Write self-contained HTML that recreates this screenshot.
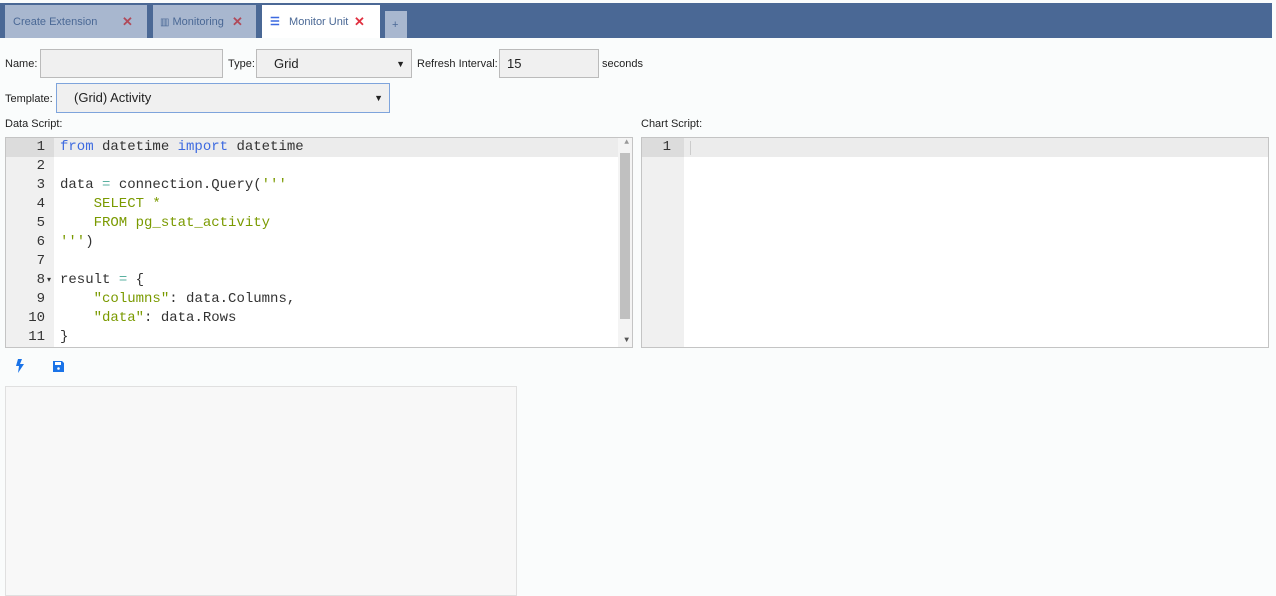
<!DOCTYPE html>
<html><head><style>
*{box-sizing:border-box;margin:0;padding:0}
body{width:1276px;height:594px;background:#fafcfc;font-family:"Liberation Sans",sans-serif;font-size:11px;color:#222;position:relative;overflow:hidden}
.bar{position:absolute;left:0;top:3px;width:1272px;height:35px;background:#4a6895}
.tab{position:absolute;top:5px;height:33px;background:#a8b7cf;color:#4a6895;font-size:11px;line-height:34px;padding-left:8px}
.tab.act{background:#fff}
.x{color:#b04a5a;font-weight:bold;position:absolute;font-size:13px}
.lbl{position:absolute;font-size:11px}
.inp{position:absolute;background:#f0f0f0;border:1px solid #bbb;font-size:13px;line-height:28px;padding-left:8px}
.sel:after{content:"▼";position:absolute;right:6px;top:0;font-size:9px;color:#222}
.ed{position:absolute;background:#fff;border:1px solid #c4c4c4;font-family:"Liberation Mono",monospace;font-size:14px;overflow:hidden}
.gut{position:absolute;left:0;top:0;bottom:0;width:48px;background:#f0f0f0;color:#333;text-align:right}
.ln{height:19px;line-height:19px;padding-right:9px}
.code{position:absolute;left:54px;top:0;color:#333}
.code div{height:19px;line-height:19px;white-space:pre}
.k{color:#3d6ae0}.s{color:#7a9a00}.o{color:#5ab0a0}
</style></head><body>
<div class="bar"></div>
<div class="tab" style="left:5px;width:142px">Create Extension<span class="x" style="left:117px;top:0">✕</span></div>
<div class="tab" style="left:153px;width:103px;padding-left:7px"><span style="font-size:10px">▥</span> Monitoring<span class="x" style="left:79px;top:0">✕</span></div>
<div class="tab act" style="left:262px;width:118px;padding-left:8px"><span style="color:#3d6ae0;font-weight:bold">☰</span>&nbsp;&nbsp; Monitor Unit<span class="x" style="left:92px;top:0;color:#e03040">✕</span></div>
<div class="tab" style="left:385px;width:22px;top:11px;height:27px;padding-left:7px;line-height:28px">+</div>

<div class="lbl" style="left:5px;top:58px">Name:</div>
<div class="inp" style="left:40px;top:49px;width:183px;height:29px"></div>
<div class="lbl" style="left:228px;top:58px">Type:</div>
<div class="inp sel" style="left:256px;top:49px;width:156px;height:29px;padding-left:17px">Grid</div>
<div class="lbl" style="left:417px;top:58px">Refresh Interval:</div>
<div class="inp" style="left:499px;top:49px;width:100px;height:29px;padding-left:7px">15</div>
<div class="lbl" style="left:602px;top:58px">seconds</div>
<div class="lbl" style="left:5px;top:93px">Template:</div>
<div class="inp sel" style="left:56px;top:83px;width:334px;height:30px;border-color:#7ea4dc;padding-left:17px">(Grid) Activity</div>

<div class="lbl" style="left:5px;top:118px">Data Script:</div>
<div class="lbl" style="left:641px;top:118px">Chart Script:</div>

<div class="ed" style="left:5px;top:137px;width:628px;height:211px">
<div style="position:absolute;left:0;right:14px;top:0;height:19px;background:#ececec"></div>
<div class="gut"><div class="ln" style="background:#dcdcdc">1</div><div class="ln">2</div><div class="ln">3</div><div class="ln">4</div><div class="ln">5</div><div class="ln">6</div><div class="ln">7</div><div class="ln">8<span style="font-size:8px;position:absolute;left:41px">▾</span></div><div class="ln">9</div><div class="ln">10</div><div class="ln">11</div></div>
<div class="code">
<div><span class="k">from</span> datetime <span class="k">import</span> datetime</div>
<div> </div>
<div>data <span class="o">=</span> connection.Query(<span class="s">'''</span></div>
<div class="s">    SELECT *</div>
<div class="s">    FROM pg_stat_activity</div>
<div><span class="s">'''</span>)</div>
<div> </div>
<div>result <span class="o">=</span> {</div>
<div>    <span class="s">"columns"</span>: data.Columns,</div>
<div>    <span class="s">"data"</span>: data.Rows</div>
<div>}</div>
</div>
<div style="position:absolute;right:0;top:0;width:14px;height:100%;background:#f4f4f4"></div>
<div style="position:absolute;right:2px;top:15px;width:10px;height:166px;background:#c0c0c0"></div>
<div style="position:absolute;right:3px;top:0;font-size:8px;color:#999">▲</div>
<div style="position:absolute;right:3px;bottom:2px;font-size:8px;color:#555">▼</div>
</div>

<div class="ed" style="left:641px;top:137px;width:628px;height:211px">
<div style="position:absolute;left:0;right:0;top:0;height:19px;background:#ececec"></div>
<div class="gut" style="width:42px"><div class="ln" style="background:#dcdcdc;padding-right:13px">1</div></div>
<div style="position:absolute;left:48px;top:3px;width:1px;height:14px;background:#ccc"></div>
</div>

<svg style="position:absolute;left:15px;top:359px" width="10" height="14" viewBox="0 0 10 14"><path d="M3 0h4L5 5h4L3 14l1-7H1z" fill="#1a73e8"/></svg>
<svg style="position:absolute;left:53px;top:361px" width="11" height="11" viewBox="0 0 11 11"><path d="M0 0h9l2 2v9H0z" fill="#1a73e8"/><rect x="2" y="1" width="6" height="3" fill="#fff"/><circle cx="5.5" cy="7.5" r="1.3" fill="#fff"/></svg>

<div style="position:absolute;left:5px;top:386px;width:512px;height:210px;background:#f8f8f8;border:1px solid #e0e0e0"></div>
</body></html>
